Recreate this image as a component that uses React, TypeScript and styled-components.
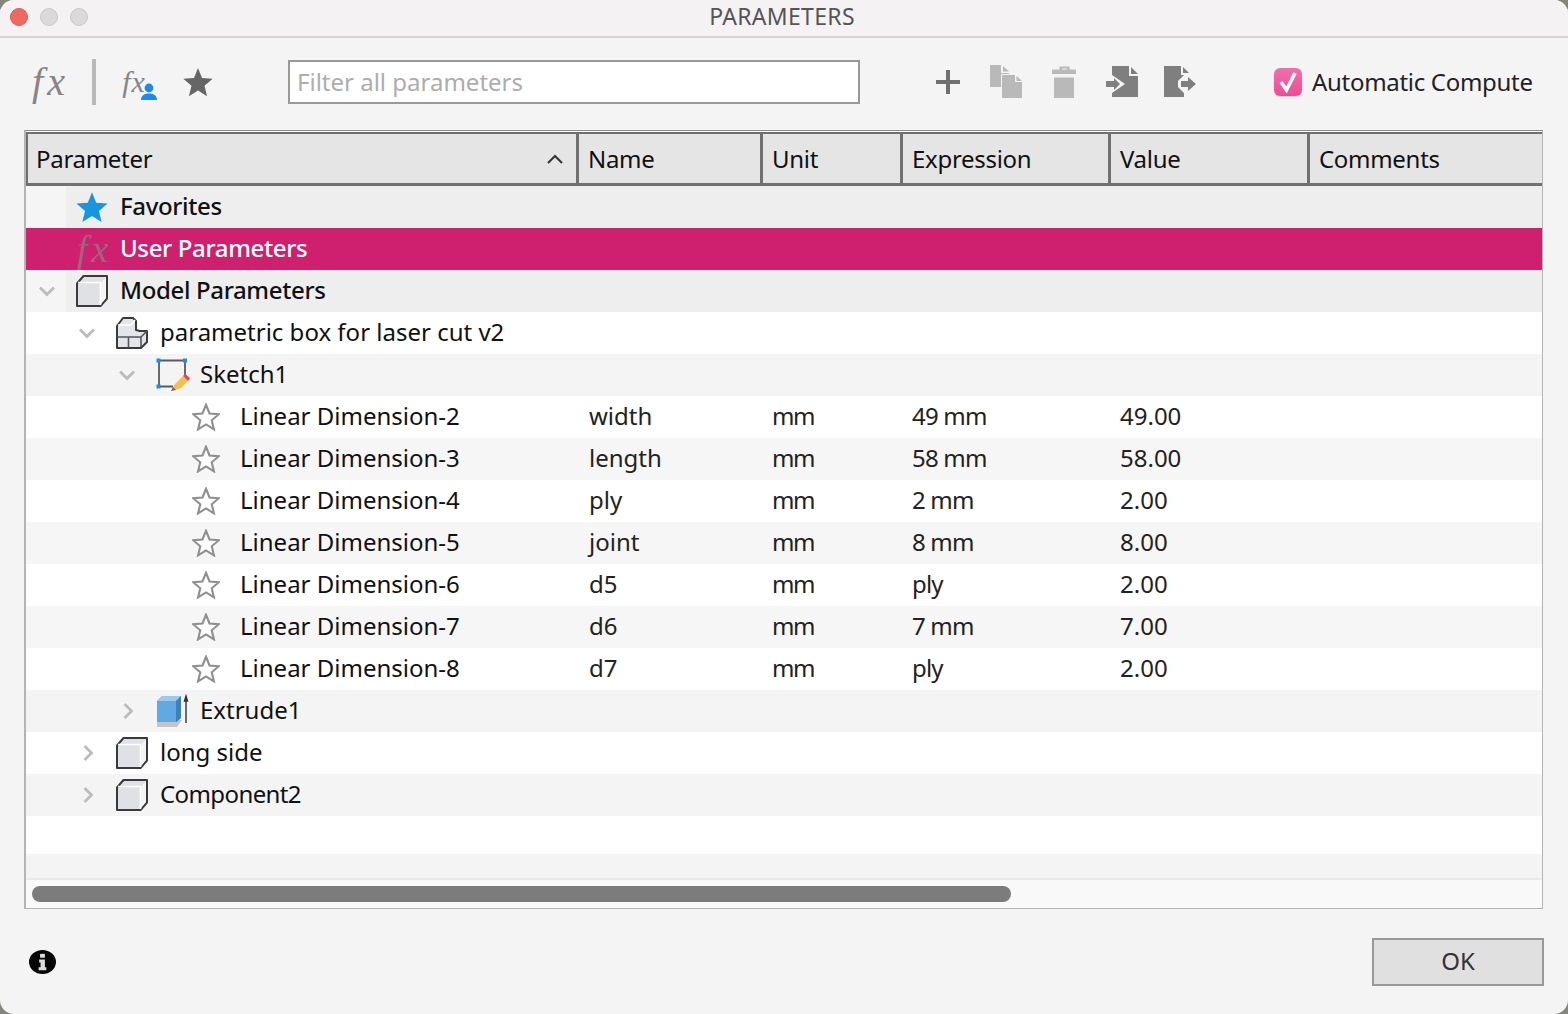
import styled, { createGlobalStyle } from "styled-components"

const GlobalStyle = createGlobalStyle`
    html, body {
        margin: 0;
        padding: 0;
        background: #85857c;
    }
    #root {
        width: 1568px;
        height: 1014px;
    }
`;

const Window = styled.div`
    width: 1568px;
    height: 1014px;
    display: flex;
    flex-direction: column;
    overflow: hidden;
    border-radius: 14px;
    background: #f4f4f4;
    font-family: "Noto Sans", "Open Sans", sans-serif;
    font-size: 24px;
    color: #111;
`;

const TitleBar = styled.div`
    position: relative;
    height: 36px;
    flex: none;
    box-sizing: border-box;
    padding: 0 4px 4px 0;
    display: flex;
    align-items: center;
    justify-content: center;
    background: #f5f2f3;
    box-shadow: 0 1px 0 #d6d4d5, 0 2px 0 #d6d4d5;
    color: #555;
    font-size: 23px;
    letter-spacing: 0.3px;
`;

const Lights = styled.div`
    position: absolute;
    left: 10px;
    top: 8px;
    display: flex;
    gap: 12px;
`;

const Light = styled.span<{ $color: string; $edge: string }>`
    width: 18px;
    height: 18px;
    box-sizing: border-box;
    border-radius: 50%;
    background: ${(p) => p.$color};
    border: 1px solid ${(p) => p.$edge};
`;

const Toolbar = styled.div`
    height: 94px;
    flex: none;
    box-sizing: border-box;
    display: flex;
    align-items: center;
    padding: 0 0 3px 32px;
`;

const ToolSlot = styled.div<{ $w: number; $h?: number; $ml?: number }>`
    width: ${(p) => p.$w}px;
    height: ${(p) => p.$h ?? 36}px;
    margin-left: ${(p) => p.$ml ?? 0}px;
    flex: none;
    position: relative;
    display: flex;
    align-items: center;
    justify-content: center;
    svg {
        display: block;
    }
`;

const FxMark = styled.span<{ $size: number; $color: string; $gap: number; $mr?: number }>`
    font-family: "Liberation Serif", "DejaVu Serif", serif;
    font-style: italic;
    font-size: ${(p) => p.$size}px;
    letter-spacing: ${(p) => p.$gap}px;
    margin-right: ${(p) => p.$mr ?? 0}px;
    line-height: 1;
    color: ${(p) => p.$color};
    white-space: nowrap;
`;

const Divider = styled.div`
    width: 4px;
    height: 46px;
    margin-left: 23px;
    flex: none;
    background: #b9b9b9;
`;

const PersonBadge = styled.svg`
    position: absolute;
    right: -1px;
    bottom: 0;
`;

const FilterInput = styled.input`
    width: 572px;
    height: 44px;
    margin-left: 74px;
    flex: none;
    box-sizing: border-box;
    border: 2px solid #999;
    background: #fff;
    padding: 0 7px;
    font: inherit;
    color: #111;
    &::placeholder {
        color: #adadad;
        opacity: 1;
    }
`;

const AutoCompute = styled.label`
    display: flex;
    align-items: center;
    gap: 10px;
    margin-left: 77px;
    color: #222;
    letter-spacing: -0.3px;
`;

const CheckBox = styled.span`
    width: 28px;
    height: 28px;
    border-radius: 6px;
    display: flex;
    align-items: center;
    justify-content: center;
    background: linear-gradient(#f26fab, #ee4b95);
    box-shadow: 0 1px 1px rgba(0, 0, 0, 0.15);
`;

const TableFrame = styled.div`
    width: 1519px;
    height: 779px;
    margin-left: 24px;
    flex: none;
    box-sizing: border-box;
    display: flex;
    flex-direction: column;
    border: 1px solid #b4b4b4;
    border-left-width: 2px;
    border-top: 1px solid #8c8c8c;
    background: #fff;
`;

const rowColumns = "553px 183px 140px 208px 198px 1fr";

const HeaderRow = styled.div`
    display: grid;
    grid-template-columns: 551px 184px 140px 208px 199px 1fr;
    height: 54px;
    margin-top: 1px;
    flex: none;
    box-sizing: border-box;
    background: #e5e5e5;
    border-top: 2px solid #707070;
    border-bottom: 3px solid #707070;
    border-left: 2px solid #707070;
    letter-spacing: -0.3px;
`;

const HeaderCell = styled.div`
    display: flex;
    align-items: center;
    justify-content: space-between;
    padding: 0 13px 0 9px;
    border-right: 3px solid #707070;
    &:first-child {
        padding-left: 8px;
    }
    &:last-child {
        border-right: none;
    }
`;

const TreeRow = styled.div<{ $bg: string; $color?: string }>`
    display: grid;
    grid-template-columns: ${rowColumns};
    height: 42px;
    flex: none;
    align-items: center;
    background: ${(p) => p.$bg};
    color: ${(p) => p.$color ?? "#111"};
`;

const TopRow = styled(TreeRow)`
    background: ${(p) => (p.$color ? p.$bg : `linear-gradient(to right, #f5f5f5 40px, ${p.$bg} 40px)`)};
    font-weight: 500;
    letter-spacing: -0.35px;
`;

const NameCell = styled.div<{ $depth: number }>`
    display: flex;
    align-items: center;
    padding-left: ${(p) => p.$depth * 40}px;
    white-space: nowrap;
`;

const ChevronSlot = styled.div`
    width: 40px;
    height: 42px;
    flex: none;
    display: flex;
    align-items: center;
    justify-content: center;
    padding-left: 3px;
    box-sizing: border-box;
`;

const IconSlot = styled.div<{ $pad?: number }>`
    width: 54px;
    flex: none;
    display: flex;
    align-items: center;
    padding-left: ${(p) => p.$pad ?? 10}px;
    box-sizing: border-box;
    svg {
        display: block;
    }
`;

const RowText = styled.span<{ $tight?: boolean }>`
    margin-bottom: 4px;
    letter-spacing: ${(p) => (p.$tight ? "-0.6px" : "inherit")};
`;

const ValueCell = styled.div`
    padding: 0 0 4px 10px;
    color: #222;
`;

const UnitCell = styled(ValueCell)`
    letter-spacing: -1.5px;
`;

const ExpressionCell = styled(ValueCell)`
    letter-spacing: -0.8px;
`;

const BlankRow = styled.div<{ $h: number; $bg: string }>`
    height: ${(p) => p.$h}px;
    flex: none;
    background: ${(p) => p.$bg};
`;

const ScrollTrack = styled.div`
    flex: 1;
    border-top: 2px solid #e9e9e9;
    background: #f9f9f9;
    padding: 6px 0 0 6px;
`;

const ScrollThumb = styled.div`
    width: 979px;
    height: 16px;
    border-radius: 8px;
    background: #7c7c7c;
`;

const Footer = styled.div`
    flex: 1;
    display: flex;
    align-items: flex-start;
    justify-content: space-between;
    padding: 29px 24px 0 29px;
`;

const InfoBadge = styled.div`
    margin-top: 12px;
    svg {
        display: block;
    }
`;

const OkButton = styled.button`
    width: 172px;
    height: 48px;
    box-sizing: border-box;
    border: 2px solid #999;
    background: #e0e0e0;
    font: inherit;
    color: #333;
    padding: 0 0 4px;
`;

const starPoints = "12,1.5 15,9 23,9.6 16.9,14.8 18.8,22.6 12,18.4 5.2,22.6 7.1,14.8 1,9.6 9,9";

function Star(props: { size: number; fill: string; stroke?: string }) {
    return (
        <svg width={props.size} height={props.size} viewBox="0 0 24 24">
            <polygon points={starPoints} fill={props.fill} stroke={props.stroke ?? "none"} strokeWidth={props.stroke ? 1.8 : 0} />
        </svg>
    );
}

function Chevron(props: { open: boolean }) {
    return (
        <svg width="18" height="18" viewBox="0 0 18 18" fill="none" stroke="#bcbcbc" strokeWidth="2.8">
            <path d={props.open ? "M1 5.5 8 12.5 15 5.5" : "M5.5 2 12.5 9 5.5 16"} />
        </svg>
    );
}

function CubeIcon() {
    return (
        <svg width="32" height="32" viewBox="0 0 32 32">
            <path d="M1 8.5 7.5 1H31V23.5L24.5 31H1Z" fill="#dfe1e5" stroke="#3a3a3e" strokeWidth="2" strokeLinejoin="round" />
            <path d="M2 7.5H24.5V30" fill="none" stroke="#fff" strokeWidth="1.6" />
            <path d="M25 7.5 30 2.5V23L25 29Z" fill="#f5f5f6" />
        </svg>
    );
}

function ComponentIcon() {
    return (
        <svg width="32" height="32" viewBox="0 0 32 32">
            <path d="M1 9 7 1H17L20 4V13L24 14H31V25L25 31H1Z" fill="#e4e5e9" stroke="#3a3a3e" strokeWidth="2" strokeLinejoin="round" />
            <path d="M1.5 20H25M12.5 20V30.5M25 20V30M25 20 31 14" fill="none" stroke="#55565a" strokeWidth="1.6" />
            <path d="M2 8H15M15 8 19 3" fill="none" stroke="#fff" strokeWidth="1.4" />
        </svg>
    );
}

function SketchIcon() {
    return (
        <svg width="34" height="34" viewBox="0 0 34 34">
            <path d="M3 2.5H29V18M3 2.5V28.5H17" fill="none" stroke="#5b5b5b" strokeWidth="1.8" />
            <rect x="0.5" y="0.5" width="4" height="4" fill="#1a8fe8" />
            <rect x="27" y="0.5" width="4" height="4" fill="#1a8fe8" />
            <rect x="0.5" y="26.5" width="4" height="4" fill="#1a8fe8" />
            <path d="M20 25 27 18 32 23 25 30 19 32 17 29Z" fill="#f3c14a" />
            <path d="M27 18 29 16 34 20 32 23Z" fill="#f0404f" />
            <path d="M17 29 20 32 15 33Z" fill="#666" />
        </svg>
    );
}

function ExtrudeIcon() {
    return (
        <svg width="34" height="34" viewBox="0 0 34 34">
            <path d="M1 26V33H21L26 26Z" fill="#c4c4c4" />
            <path d="M1 7 6 2H25V24L21 28H1Z" fill="#62a8e2" />
            <path d="M20 7H1L6 2H25Z" fill="#9cc9ee" />
            <path d="M20 7 25 2V24L20 28Z" fill="#3d80bf" />
            <path d="M30 29V4M28.5 7 30 2 31.5 7Z" fill="#333" stroke="#333" strokeWidth="1.4" />
        </svg>
    );
}

function PlusIcon() {
    return (
        <svg width="26" height="26" viewBox="0 0 26 26">
            <path d="M13 1V25M1 13H25" stroke="#6f6f6f" strokeWidth="4" />
        </svg>
    );
}

function CopyIcon() {
    return (
        <svg width="33" height="33" viewBox="0 0 33 33" fill="#b9b9b9">
            <path d="M0 0H11V8H19V9H11V22H0Z" />
            <path d="M13 1 19 6.5H13Z" />
            <path d="M12 10H25V17H32V33H12Z" />
            <path d="M26.5 11 32 16H26.5Z" />
        </svg>
    );
}

function TrashIcon() {
    return (
        <svg width="24" height="32" viewBox="0 0 24 32" fill="#b9b9b9">
            <path d="M0 3.5H7.5V0.5H17.5V3.5H24V8H0ZM10 2.5V3.5H15V2.5Z" fillRule="evenodd" />
            <path d="M2 11.5H22V32H2Z" />
        </svg>
    );
}

function ImportIcon() {
    return (
        <svg width="33" height="32" viewBox="0 0 33 32" fill="#7f7f7f">
            <path d="M6 0H23V10H32V31H6V27L19 18 6 9Z" />
            <path d="M25 1 32 8H25Z" />
            <path d="M0 15H8V12L14 18 8 24V21H0Z" />
        </svg>
    );
}

function ExportIcon() {
    return (
        <svg width="33" height="32" viewBox="0 0 33 32" fill="#7f7f7f">
            <path d="M0 0H17V9H20L14 15V21L20 27V31H0Z" />
            <path d="M19 1 25 7H19Z" />
            <path d="M17 15H24V11L32 18 24 25V21H17Z" />
        </svg>
    );
}

function InfoIcon() {
    return (
        <svg width="27" height="24" viewBox="0 0 28 28" preserveAspectRatio="none">
            <circle cx="14" cy="14" r="14" fill="#050505" />
            <rect x="11.5" y="4.5" width="5" height="4.5" fill="#ddd" />
            <path d="M10.5 11H16.5V20H18V23.5H10V20H12V14.5H10.5Z" fill="#ddd" />
        </svg>
    );
}

const dimensions = [
    { label: "Linear Dimension-2", name: "width", expression: "49 mm", value: "49.00" },
    { label: "Linear Dimension-3", name: "length", expression: "58 mm", value: "58.00" },
    { label: "Linear Dimension-4", name: "ply", expression: "2 mm", value: "2.00" },
    { label: "Linear Dimension-5", name: "joint", expression: "8 mm", value: "8.00" },
    { label: "Linear Dimension-6", name: "d5", expression: "ply", value: "2.00" },
    { label: "Linear Dimension-7", name: "d6", expression: "7 mm", value: "7.00" },
    { label: "Linear Dimension-8", name: "d7", expression: "ply", value: "2.00" },
];

export default function App() {
    return (
        <>
            <GlobalStyle />
            <Window>
                <TitleBar>
                    <Lights>
                        <Light $color="#ee6a5e" $edge="#e0584c" />
                        <Light $color="#dcd9da" $edge="#cbc8c9" />
                        <Light $color="#dcd9da" $edge="#cbc8c9" />
                    </Lights>
                    PARAMETERS
                </TitleBar>
                <Toolbar>
                    <ToolSlot $w={37}>
                        <FxMark $size={40} $color="#858585" $gap={4}>fx</FxMark>
                    </ToolSlot>
                    <Divider />
                    <ToolSlot $w={34} $ml={26}>
                        <FxMark $size={30} $color="#858585" $gap={1} $mr={10}>fx</FxMark>
                        <PersonBadge width="16" height="17" viewBox="0 0 16 17">
                            <circle cx="8" cy="5" r="4.4" fill="#1c8cec" />
                            <path d="M0 17C0 12 4 10.5 8 10.5S16 12 16 17Z" fill="#1c8cec" />
                        </PersonBadge>
                    </ToolSlot>
                    <ToolSlot $w={32} $ml={26}>
                        <Star size={32} fill="#666" />
                    </ToolSlot>
                    <FilterInput placeholder="Filter all parameters" readOnly />
                    <ToolSlot $w={26} $ml={75}><PlusIcon /></ToolSlot>
                    <ToolSlot $w={33} $ml={29}><CopyIcon /></ToolSlot>
                    <ToolSlot $w={24} $ml={29}><TrashIcon /></ToolSlot>
                    <ToolSlot $w={33} $ml={30}><ImportIcon /></ToolSlot>
                    <ToolSlot $w={33} $ml={25}><ExportIcon /></ToolSlot>
                    <AutoCompute>
                        <CheckBox>
                            <svg width="20" height="22" viewBox="0 0 20 22" fill="none" stroke="#fff" strokeWidth="3.6">
                                <path d="M3 11 8.5 19 17 2" />
                            </svg>
                        </CheckBox>
                        Automatic Compute
                    </AutoCompute>
                </Toolbar>
                <TableFrame>
                    <HeaderRow>
                        <HeaderCell>
                            Parameter
                            <svg width="16" height="10" viewBox="0 0 16 10" fill="none" stroke="#333" strokeWidth="2">
                                <path d="M1 9 8 2 15 9" />
                            </svg>
                        </HeaderCell>
                        <HeaderCell>Name</HeaderCell>
                        <HeaderCell>Unit</HeaderCell>
                        <HeaderCell>Expression</HeaderCell>
                        <HeaderCell>Value</HeaderCell>
                        <HeaderCell>Comments</HeaderCell>
                    </HeaderRow>
                    <TopRow $bg="#eeeeee">
                        <NameCell $depth={0}>
                            <ChevronSlot />
                            <IconSlot $pad={9}><Star size={34} fill="#1596de" /></IconSlot>
                            <RowText>Favorites</RowText>
                        </NameCell>
                    </TopRow>
                    <TopRow $bg="#cf2070" $color="#fff">
                        <NameCell $depth={0}>
                            <ChevronSlot />
                            <IconSlot $pad={11}><FxMark $size={38} $color="#a0647f" $gap={4}>fx</FxMark></IconSlot>
                            <RowText>User Parameters</RowText>
                        </NameCell>
                    </TopRow>
                    <TopRow $bg="#eeeeee">
                        <NameCell $depth={0}>
                            <ChevronSlot><Chevron open /></ChevronSlot>
                            <IconSlot><CubeIcon /></IconSlot>
                            <RowText>Model Parameters</RowText>
                        </NameCell>
                    </TopRow>
                    <TreeRow $bg="#ffffff">
                        <NameCell $depth={1}>
                            <ChevronSlot><Chevron open /></ChevronSlot>
                            <IconSlot><ComponentIcon /></IconSlot>
                            <RowText>parametric box for laser cut v2</RowText>
                        </NameCell>
                    </TreeRow>
                    <TreeRow $bg="#f4f4f4">
                        <NameCell $depth={2}>
                            <ChevronSlot><Chevron open /></ChevronSlot>
                            <IconSlot><SketchIcon /></IconSlot>
                            <RowText>Sketch1</RowText>
                        </NameCell>
                    </TreeRow>
                    {dimensions.map((d, i) => (
                        <TreeRow key={d.label} $bg={i % 2 === 0 ? "#ffffff" : "#f6f6f6"}>
                            <NameCell $depth={3}>
                                <ChevronSlot />
                                <IconSlot $pad={6}><Star size={28} fill="#fff" stroke="#8f8f8f" /></IconSlot>
                                <RowText>{d.label}</RowText>
                            </NameCell>
                            <ValueCell>{d.name}</ValueCell>
                            <UnitCell>mm</UnitCell>
                            <ExpressionCell>{d.expression}</ExpressionCell>
                            <ValueCell>{d.value}</ValueCell>
                        </TreeRow>
                    ))}
                    <TreeRow $bg="#f4f4f4">
                        <NameCell $depth={2}>
                            <ChevronSlot><Chevron open={false} /></ChevronSlot>
                            <IconSlot><ExtrudeIcon /></IconSlot>
                            <RowText>Extrude1</RowText>
                        </NameCell>
                    </TreeRow>
                    <TreeRow $bg="#ffffff">
                        <NameCell $depth={1}>
                            <ChevronSlot><Chevron open={false} /></ChevronSlot>
                            <IconSlot><CubeIcon /></IconSlot>
                            <RowText>long side</RowText>
                        </NameCell>
                    </TreeRow>
                    <TreeRow $bg="#f4f4f4">
                        <NameCell $depth={1}>
                            <ChevronSlot><Chevron open={false} /></ChevronSlot>
                            <IconSlot><CubeIcon /></IconSlot>
                            <RowText $tight>Component2</RowText>
                        </NameCell>
                    </TreeRow>
                    <BlankRow $h={38} $bg="#ffffff" />
                    <BlankRow $h={24} $bg="#f4f4f4" />
                    <ScrollTrack>
                        <ScrollThumb />
                    </ScrollTrack>
                </TableFrame>
                <Footer>
                    <InfoBadge><InfoIcon /></InfoBadge>
                    <OkButton>OK</OkButton>
                </Footer>
            </Window>
        </>
    );
}
